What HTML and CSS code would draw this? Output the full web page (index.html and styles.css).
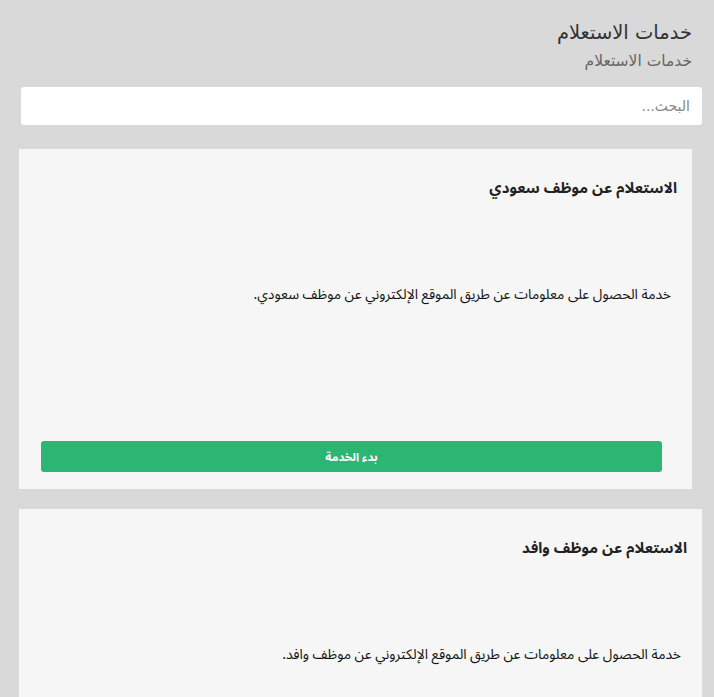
FILE: index.html
```html
<!DOCTYPE html>
<html lang="ar" dir="rtl">
<head>
  <meta charset="UTF-8">
  <meta name="viewport" content="width=device-width, initial-scale=1.0">
  <title>خدمات الاستعلام</title>
  <link rel="stylesheet" href="styles.css">
</head>
<body>

  <div class="pagina">
    <div class="cabecera">
      <h1>خدمات الاستعلام</h1>
      <p class="ruta">خدمات الاستعلام</p>
    </div>

    <input type="text" class="buscador" placeholder="البحث...">

    <div class="tarjeta tarjeta-estrecha">
      <h3>الاستعلام عن موظف سعودي</h3>
      <p class="descripcion">خدمة الحصول على معلومات عن طريق الموقع الإلكتروني عن موظف سعودي.</p>
      <button type="button">بدء الخدمة</button>
    </div>

    <div class="tarjeta">
      <h3>الاستعلام عن موظف وافد</h3>
      <p class="descripcion">خدمة الحصول على معلومات عن طريق الموقع الإلكتروني عن موظف وافد.</p>
      <button type="button">بدء الخدمة</button>
    </div>
  </div>

</body>
</html>
```

FILE: styles.css
```css
/* --- Generales --- */
body {
  font-family: "DejaVu Sans", sans-serif;
  background: #d9d9d9;
  color: #222;
  margin: 0;
}

.pagina {
  padding: 18px 12px 0 19px;
}

/* --- Cabecera --- */
.cabecera {
  padding-right: 10px;
}
.cabecera h1 {
  font-size: 19.5px;
  font-weight: normal;
  line-height: 26px;
  margin: 2px 0 0;
  color: #333;
}
.ruta {
  font-size: 15.5px;
  line-height: 20px;
  margin: 5px 0 0;
  color: #666;
}

/* --- Buscador --- */
.buscador {
  display: block;
  width: calc(100% - 2px);
  margin: 16px 0 24px auto;
  height: 38px;
  box-sizing: border-box;
  border: none;
  border-radius: 3px;
  padding: 0 12px;
  font-family: inherit;
  font-size: 14px;
  background: #fff;
}
.buscador::placeholder {
  color: #888;
}

/* --- Tarjetas --- */
.tarjeta {
  font-family: "Noto Sans Arabic", "Noto Sans", sans-serif;
  background: #f6f6f6;
  padding: 26px 15px 17px 22px;
  margin-bottom: 20px;
  display: flex;
  flex-direction: column;
}
.tarjeta-estrecha {
  margin-right: 10px;
}
.tarjeta h3 {
  font-size: 15px;
  line-height: 26px;
  margin: 0;
  color: #222;
}
.descripcion {
  font-size: 13.85px;
  line-height: 20px;
  margin: 84px 6px 0 0;
  min-height: 156px;
  color: #111;
}
button {
  background: #2db573;
  color: #fff;
  border: none;
  border-radius: 3px;
  height: 31px;
  margin-right: 15px;
  font-family: inherit;
  font-size: 11.5px;
  font-weight: bold;
  cursor: pointer;
}
button:hover {
  background: #27a064;
}
```
